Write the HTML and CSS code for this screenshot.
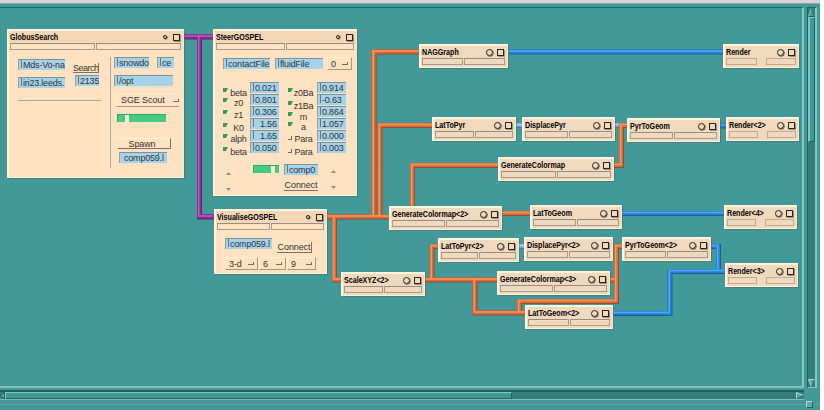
FILE: index.html
```html
<!DOCTYPE html>
<html lang="en">
<head>
  <meta charset="UTF-8" />
  <title>Map Editor</title>
  <link rel="stylesheet" href="styles.css">
</head>
<body>
  <div class="window">
    <div class="top-strip"></div>
    <div class="workspace">
      <div class="canvas">
        <svg class="wires" width="802" height="378" viewBox="0 8 802 378">
          <defs>
            <path id="orange" d="M419 51.5H373.5V216 M432 125H379.5V216 M498 165H412V207 M327 216.5H390 M334 216.5V279.5H341 M502 213H530 M425 279.5H497 M431.500 279.500V246H439 M474.500 279.500V312.500H525 M610 279.500H615.500 M622 246H616V301H519V312.500 M614 165H621V125H628" />
            <path id="blue" d="M507 51.500H723 M720 125.500H726 M622 213H724 M711 246H718V271 M613 313H669.500V271H725" />
            <path id="pale" d="M516 125H522 M615 125H620 M519 246H525" />
            <path id="purple" d="M184 36.500H213 M199 36.500V216.500H214" />
          </defs>
          <g class="blue"><use href="#blue" class="shade" /><use href="#blue" class="base" /><use href="#blue" class="shine" /></g>
          <g class="pale"><use href="#pale" class="shade" /><use href="#pale" class="base" /><use href="#pale" class="shine" /></g>
          <g class="orange"><use href="#orange" class="shade" /><use href="#orange" class="base" /><use href="#orange" class="shine" /></g>
          <g class="purple"><use href="#purple" class="shade" /><use href="#purple" class="base" /><use href="#purple" class="shine" /></g>
        </svg>

        <div class="node big globus">
          <div class="title"><b>GlobusSearch</b><i class="dot"></i><i class="box"></i></div>
          <div class="bar"><i></i><i></i></div>
          <div class="globus-body">
            <div class="globus-left">
              <div class="line">
                <span class="field w47">Mds-Vo-na</span>
                <span class="btn search">Search</span>
              </div>
              <div class="line second">
                <span class="field w47">iri23.leeds.</span>
                <span class="field w24">2135</span>
              </div>
            </div>
            <div class="globus-right">
              <div class="line"><span class="field w35">snowdo</span><span class="field w17">ce</span></div>
              <span class="field w59">/opt</span>
              <span class="menu scout">SGE Scout</span>
              <div class="slider"><i></i></div>
              <span class="btn spawn">Spawn</span>
              <span class="field host">comp059.l</span>
            </div>
          </div>
        </div>

        <div class="node big steer">
          <div class="title"><b>SteerGOSPEL</b><i class="dot"></i><i class="box"></i></div>
          <div class="bar"><i></i><i></i></div>
          <div class="files">
            <span class="field w47">contactFile</span>
            <span class="field w48">fluidFile</span>
            <span class="menu zero">0</span>
          </div>
          <div class="params">
            <div class="labels first">
              <span>beta</span><span>z0</span><span>z1</span><span>K0</span><span>alph</span><span>beta</span>
            </div>
            <div class="values">
              <span class="field">0.021</span><span class="field">0.801</span><span class="field">0.306</span><span class="field right">1.56</span><span class="field right">1.65</span><span class="field">0.050</span>
            </div>
            <div class="labels last">
              <span>z0Ba</span><span>z1Ba</span><span>m</span><span>a</span><span class="off">Para</span><span class="off">Para</span>
            </div>
            <div class="values">
              <span class="field">0.914</span><span class="field">-0.63</span><span class="field">0.864</span><span class="field">1.057</span><span class="field">0.000</span><span class="field">0.003</span>
            </div>
          </div>
          <div class="steer-foot">
            <div class="arrows"><i class="up"></i><i class="down"></i></div>
            <div class="slider"><i></i></div>
            <div class="connect-col">
              <span class="field">comp0</span>
              <span class="btn link">Connect</span>
            </div>
            <div class="arrows high"><i class="up"></i><i class="down"></i></div>
          </div>
        </div>

        <div class="node big visualise">
          <div class="title"><b>VisualiseGOSPEL</b><i class="dot"></i><i class="box"></i></div>
          <div class="bar"><i></i><i></i></div>
          <div class="line vis-top">
            <span class="field w47">comp059.l</span>
            <span class="btn">Connect</span>
          </div>
          <div class="line vis-menus">
            <span class="menu">3-d</span>
            <span class="menu">6</span>
            <span class="menu">9</span>
          </div>
        </div>

        <div class="node nag"><div class="title"><b>NAGGraph</b><i class="dot"></i><i class="box"></i></div><div class="bar"><i></i><i></i></div></div>
        <div class="node render split"><div class="title"><b>Render</b><i class="dot"></i><i class="box"></i></div><div class="bar"><i></i><i></i></div></div>
        <div class="node lattopyr"><div class="title"><b>LatToPyr</b><i class="dot"></i><i class="box"></i></div><div class="bar"><i></i><i></i></div></div>
        <div class="node displacepyr"><div class="title"><b>DisplacePyr</b><i class="dot"></i><i class="box"></i></div><div class="bar"><i></i><i></i></div></div>
        <div class="node pyrtogeom"><div class="title"><b>PyrToGeom</b><i class="dot"></i><i class="box"></i></div><div class="bar"><i></i><i></i></div></div>
        <div class="node render2 split"><div class="title"><b>Render&lt;2&gt;</b><i class="dot"></i><i class="box"></i></div><div class="bar"><i></i><i></i></div></div>
        <div class="node colormap"><div class="title"><b>GenerateColormap</b><i class="dot"></i><i class="box"></i></div><div class="bar"><i></i><i></i></div></div>
        <div class="node colormap2"><div class="title"><b>GenerateColormap&lt;2&gt;</b><i class="dot"></i><i class="box"></i></div><div class="bar"><i></i><i></i></div></div>
        <div class="node lattogeom"><div class="title"><b>LatToGeom</b><i class="dot"></i><i class="box"></i></div><div class="bar"><i></i><i></i></div></div>
        <div class="node render4 split"><div class="title"><b>Render&lt;4&gt;</b><i class="dot"></i><i class="box"></i></div><div class="bar"><i></i><i></i></div></div>
        <div class="node lattopyr2"><div class="title"><b>LatToPyr&lt;2&gt;</b><i class="dot"></i><i class="box"></i></div><div class="bar"><i></i><i></i></div></div>
        <div class="node displacepyr2"><div class="title"><b>DisplacePyr&lt;2&gt;</b><i class="dot"></i><i class="box"></i></div><div class="bar"><i></i><i></i></div></div>
        <div class="node pyrtogeom2"><div class="title"><b>PyrToGeom&lt;2&gt;</b><i class="dot"></i><i class="box"></i></div><div class="bar"><i></i><i></i></div></div>
        <div class="node render3 split"><div class="title"><b>Render&lt;3&gt;</b><i class="dot"></i><i class="box"></i></div><div class="bar"><i></i><i></i></div></div>
        <div class="node scale2"><div class="title"><b>ScaleXYZ&lt;2&gt;</b><i class="dot"></i><i class="box"></i></div><div class="bar"><i></i><i></i></div></div>
        <div class="node colormap3"><div class="title"><b>GenerateColormap&lt;3&gt;</b><i class="dot"></i><i class="box"></i></div><div class="bar"><i></i><i></i></div></div>
        <div class="node lattogeom2"><div class="title"><b>LatToGeom&lt;2&gt;</b><i class="dot"></i><i class="box"></i></div><div class="bar"><i></i><i></i></div></div>
      </div>

      <div class="vscroll">
        <svg width="7" height="9" viewBox="0 0 7 9"><path d="M.5 8.500L3.500 .500L6.500 8.500Z" fill="#429998" stroke="#86c6c4" /><path d="M3.500 .500L6.500 8.500H.500" fill="none" stroke="#1f6160" /></svg>
        <div class="vthumb"></div>
        <svg width="7" height="8" viewBox="0 0 7 8"><path d="M.5 .5H6.500L3.500 7.500Z" fill="#5aa9a7" stroke="#a5dcda" /><path d="M6.500 .500L3.500 7.500" stroke="#1f6160" /></svg>
      </div>
    </div>

    <div class="hscroll">
      <svg width="5" height="7" viewBox="0 0 5 7"><path d="M4.500 .5V6.500L0 3.500Z" fill="#5aa9a7" stroke="#1f6160" /></svg>
      <div class="hthumb"></div>
      <svg class="right-arrow" width="8" height="7" viewBox="0 0 8 7"><path d="M.5 .5L7.500 3.500L.5 6.500Z" fill="#5aa9a7" stroke="#a5dcda" /><path d="M7.500 3.500L.5 6.500" stroke="#1f6160" /></svg>
    </div>
    <div class="pane-edge"><i class="sash"></i></div>
  </div>
</body>
</html>
```

FILE: styles.css
```css
body {
  margin: 0;
  background: white;
  font-family: "Liberation Sans", Arial, sans-serif;
  font-size: 9px;
  color: #333;
  overflow: hidden;
}
.window {
  width: 820px;
  height: 410px;
  background: #429998;
  display: flex;
  flex-direction: column;
}
.top-strip {
  height: 3px;
  flex: none;
  background: #dad4da;
  border-bottom: 1px solid #8ea5a8;
  margin-bottom: 3px;
}
.workspace {
  display: flex;
  height: 381px;
}
.canvas {
  position: relative;
  width: 802px;
  height: 378px;
  border-top: 1px solid #1d6a6a;
  border-right: 2px solid #83c6c3;
  border-bottom: 2px solid #83bcbc;
}
.wires {
  position: absolute;
  left: 0;
  top: 0;
}
.wires use {
  fill: none;
}
.shade { stroke-width: 5; transform: translate(.5px, .5px); }
.base { stroke-width: 4; }
.shine { stroke-width: 1.5; transform: translate(-.3px, -.5px); }
.orange .shade { stroke: #8a5038; }
.orange .base { stroke: #dc6a35; }
.orange .shine { stroke: #fb9560; }
.blue .shade { stroke: #1c5f98; }
.blue .base { stroke: #2480d8; }
.blue .shine { stroke: #55a8f5; }
.pale .shade { stroke: #3a76a8; }
.pale .base { stroke: #66a4e4; }
.pale .shine { stroke: #b0d4ff; }
.purple .shade { stroke: #5c2670; }
.purple .base { stroke: #8a2a94; }
.purple .shine { stroke: #c458c4; }

/* modules on the canvas */
.node {
  position: absolute;
  box-sizing: border-box;
  height: 24px;
  background: #f0d9bd;
  border: 1px solid #fff5dc;
  border-width: 2px 1px 1px 2px;
  border-right-color: #f8e8cc;
  border-bottom-color: #fff3d8;
  box-shadow: 1px 1px 0 rgba(60, 90, 80, .35);
}
.big {
  background: linear-gradient(#f3d6b6 11px, #ffe2c2 14px);
}
.title {
  display: flex;
  align-items: center;
  height: 12px;
  padding: 0 3px 0 1px;
}
.title b {
  flex: 1;
  width: 0;
  white-space: nowrap;
  font-size: 9px;
  line-height: 12px;
  color: #000;
  transform: scaleX(.79);
  transform-origin: 0 50%;
}
.dot {
  box-sizing: border-box;
  width: 7px;
  height: 7px;
  border: 1px solid #2a241e;
  border-radius: 50%;
  box-shadow: .5px .5px 0 #2a241e;
  margin-right: 4px;
}
.big .dot {
  width: 4px;
  height: 4px;
  margin-right: 6px;
}
.box {
  box-sizing: border-box;
  width: 7px;
  height: 7px;
  border: 1px solid #2a241e;
  box-shadow: 1px 1px 0 rgba(42, 36, 30, .4);
}
.bar {
  display: flex;
  gap: 1px;
  height: 7px;
  padding: 0 2px 0 1px;
}
.bar i {
  flex: 1;
  box-sizing: border-box;
  border: 1px solid #a89c90;
  border-top-color: #988e86;
}
.split .bar {
  gap: 9px;
}
.split .bar i {
  border-color: #c0ab93;
}

.globus { left: 7px; top: 21px; width: 177px; height: 149px; }
.steer { left: 213px; top: 21px; width: 144px; height: 167px; }
.visualise { left: 214px; top: 201px; width: 113px; height: 65px; }
.nag { left: 419px; top: 36px; width: 89px; }
.render { left: 723px; top: 36px; width: 76px; }
.lattopyr { left: 432px; top: 109px; width: 84px; }
.displacepyr { left: 522px; top: 109px; width: 93px; }
.pyrtogeom { left: 627px; top: 110px; width: 93px; }
.render2 { left: 726px; top: 109px; width: 73px; }
.colormap { left: 498px; top: 149px; width: 116px; }
.colormap2 { left: 389px; top: 198px; width: 113px; }
.lattogeom { left: 530px; top: 197px; width: 92px; }
.render4 { left: 724px; top: 197px; width: 73px; }
.lattopyr2 { left: 438px; top: 230px; width: 81px; }
.displacepyr2 { left: 524px; top: 229px; width: 89px; }
.pyrtogeom2 { left: 622px; top: 229px; width: 89px; }
.render3 { left: 725px; top: 255px; width: 73px; }
.scale2 { left: 341px; top: 264px; width: 84px; }
.colormap3 { left: 497px; top: 263px; width: 113px; }
.lattogeom2 { left: 525px; top: 297px; width: 88px; }

/* widgets */
.field, .btn, .menu {
  display: block;
  box-sizing: border-box;
  white-space: nowrap;
  overflow: hidden;
  letter-spacing: -.1px;
}
.field {
  height: 11px;
  line-height: 10px;
  padding-left: 4px;
  background: #a6d3ec;
  border-top: 1px solid #7d9096;
  border-left: 1px solid #a09c90;
  position: relative;
  letter-spacing: -.2px;
}
/* insertion cursor */
.field::before {
  content: "";
  position: absolute;
  left: 2px;
  top: 0;
  height: 8px;
  border-left: 1px solid #5c7a88;
}
.btn {
  height: 11px;
  line-height: 10px;
  text-align: center;
  border-right: 1px solid #807060;
  border-bottom: 1px solid #807060;
}
.menu {
  height: 13px;
  line-height: 12px;
  display: flex;
  align-items: center;
  justify-content: space-between;
  padding: 0 3px;
  border: 1px solid #fff0d6;
  border-right-color: #a89880;
  border-bottom-color: #a89880;
}
.menu::after {
  content: "";
  width: 5px;
  height: 2px;
  border-right: 1px solid #776a5c;
  border-bottom: 1px solid #776a5c;
}
.w17 { width: 17px; }
.w24 { width: 24px; }
.w35 { width: 35px; }
.w47 { width: 47px; }
.w48 { width: 48px; }
.w59 { width: 59px; }
.line {
  display: flex;
}
.slider {
  box-sizing: border-box;
  background: #44cc80;
  height: 8px;
  border-top: 1px solid #3aa068;
  border-left: 1px solid #3aa068;
}
.slider i {
  display: block;
  width: 4px;
  height: 7px;
  background: #f8ecd0;
}

.globus-body {
  display: flex;
  padding: 7px 0 0 9px;
}
.globus-left {
  width: 83px;
  height: 41px;
  padding-top: 2px;
  border-bottom: 1px solid #a8a8a0;
  margin-right: 9px;
}
.search {
  width: 26px;
  height: 10px;
  margin: 4px 0 0 8px;
  letter-spacing: -.5px;
}
.second {
  margin-top: 4px;
}
.second .w24 {
  margin: -2px 0 0 10px;
}
.globus-right {
  display: flex;
  flex-direction: column;
  align-items: flex-start;
  height: 111px;
  padding-left: 3px;
  border-left: 1px solid #aaa79c;
}
.globus-right .line {
  gap: 8px;
  margin-bottom: 7px;
}
.scout {
  width: 63px;
  height: 14px;
  margin: 7px 0 7px 2px;
  padding: 0 0 0 4px;
  border-right: none;
}
.globus-right .slider {
  width: 49px;
  margin: 0 0 16px 3px;
  padding-left: 7px;
}
.spawn {
  width: 53px;
  margin: 0 0 3px 4px;
  padding-right: 4px;
  border-top: 1px solid #fff3da;
}
.host {
  width: 48px;
  margin-left: 5px;
}
.host::before {
  left: 38px;
}

.files {
  display: flex;
  gap: 5px;
  padding: 8px 0 0 8px;
}
.zero {
  width: 25px;
  margin: -1px 0 0 -1px;
}
.params {
  display: flex;
  padding: 12px 0 0 7px;
}
.labels, .values {
  display: flex;
  flex-direction: column;
}
.labels span {
  display: flex;
  justify-content: center;
  width: 23px;
  height: 10px;
  line-height: 10px;
  padding-left: 5px;
  white-space: nowrap;
  letter-spacing: -.2px;
  position: relative;
}
/* toggle mark in front of a parameter name */
.labels span::before {
  content: "";
  position: absolute;
  left: 1px;
  top: 0;
  width: 5px;
  height: 4px;
  background: #2f9c58;
  clip-path: polygon(0 0, 100% 0, 60% 100%, 0 100%);
}
.labels .off::before {
  background: none;
  clip-path: none;
  top: 2px;
  width: 3px;
  height: 3px;
  border-right: 1px solid #776a5c;
  border-bottom: 1px solid #776a5c;
}
.labels {
  padding-top: 6px;
}
.first span:nth-child(3) { margin-top: 2px; }
.first span:nth-child(4) { margin-top: 3px; }
.first span:nth-child(5) { margin-top: 1px; }
.first span:nth-child(6) { margin-top: 3px; }
.last span:nth-child(2) { margin-top: 3px; }
.last span:nth-child(3) { margin-top: 1px; }
.last span:nth-child(5) { margin-top: 2px; }
.last span:nth-child(6) { margin-top: 3px; }
.values {
  gap: 1px;
  width: 29px;
}
.last {
  margin: 0 2px 0 8px;
}
.values .right {
  padding-left: 9px;
}
.steer-foot {
  display: flex;
  padding: 9px 0 0 11px;
}
.steer-foot .slider {
  width: 26px;
  margin: -1px 5px 0 22px;
  padding-left: 17px;
}
.connect-col {
  display: flex;
  flex-direction: column;
  gap: 5px;
  width: 34px;
  margin-top: -2px;
}
.link {
  border-right: none;
}
.arrows {
  display: flex;
  flex-direction: column;
  gap: 13px;
  padding-top: 6px;
}
.high {
  padding-top: 4px;
  margin-left: 13px;
}
.arrows i {
  width: 5px;
  height: 3px;
  background: #7f9a78;
  clip-path: polygon(50% 0, 100% 100%, 0 100%);
}
.arrows .down {
  clip-path: polygon(0 0, 100% 0, 50% 100%);
}
.vis-top {
  padding: 8px 0 0 9px;
  gap: 5px;
}
.vis-top .btn {
  width: 35px;
  margin-top: 4px;
}
.vis-menus {
  gap: 1px;
  padding: 4px 0 0 9px;
}
.vis-menus .menu { width: 27px; }
.vis-menus .menu:first-child { width: 33px; }
.vis-menus .menu:last-child { width: 29px; }

/* scroll bars */
.vscroll {
  box-sizing: border-box;
  width: 10px;
  height: 381px;
  margin-left: 3px;
  background: #347f7e;
  border: 1px solid #1f6160;
  border-right: 2px solid #83c6c3;
  border-bottom: 1px solid #83c6c3;
  display: flex;
  flex-direction: column;
}
.vthumb {
  box-sizing: border-box;
  height: 125px;
  margin-bottom: auto;
  background: #429998;
  border: 1px solid #1f6160;
  border-top-color: #83c6c3;
  border-left: 2px solid #83c6c3;
}
.hscroll {
  box-sizing: border-box;
  width: 804px;
  height: 10px;
  margin-top: 2px;
  background: #347f7e;
  border-top: 2px solid #1f6160;
  border-bottom: 1px solid #83bcbc;
  display: flex;
}
.hthumb {
  box-sizing: border-box;
  width: 507px;
  height: 7px;
  background: #429998;
  border: 1px solid #1f6160;
  border-top-color: #83c6c3;
  border-left-color: #83c6c3;
}
.right-arrow {
  margin-left: auto;
}
.pane-edge {
  margin-top: 4px;
  border-top: 1px solid #6a9c9c;
  height: 5px;
  display: flex;
  justify-content: flex-end;
}
.sash {
  width: 5px;
  height: 5px;
  margin: -4px 7px 0 0;
  background: #62aeac;
  border: 1px solid #a5dcda;
  border-right-color: #1f6160;
  border-bottom-color: #1f6160;
}
```
